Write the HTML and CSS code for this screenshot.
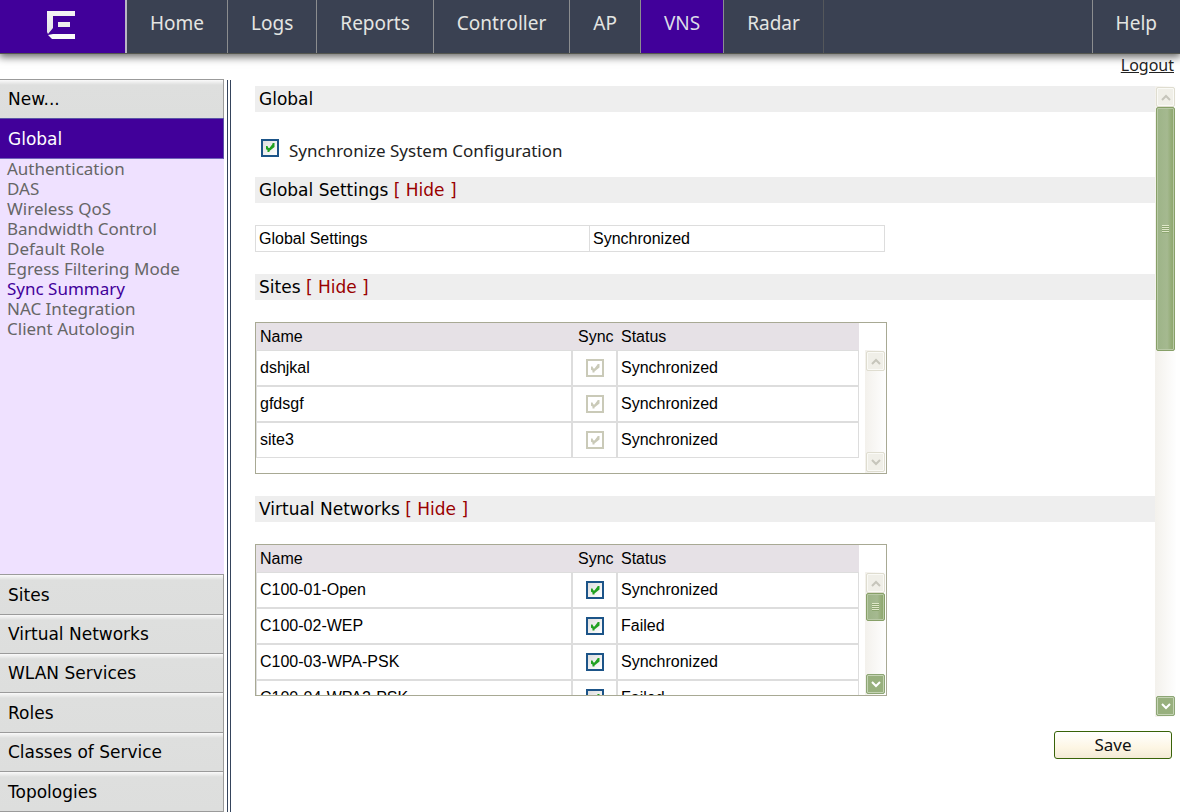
FILE: index.html
```html
<!DOCTYPE html>
<html lang="en">
<head>
<meta charset="utf-8">
<title>VNS - Sync Summary</title>
<link rel="stylesheet" href="styles.css">
</head>
<body>
<header class="topbar">
  <a class="brand" href="#" aria-label="Start page">
    <svg class="brand-mark" viewBox="0 0 30 30" aria-hidden="true">
      <defs>
        <linearGradient id="metal" x1="0" y1="0" x2="0" y2="1">
          <stop offset="0" stop-color="#f4f4f4"/>
          <stop offset="1" stop-color="#e2e2e6"/>
        </linearGradient>
      </defs>
      <path fill="url(#metal)" d="M1 1H29V6H7V18L2 24L1 22Z"/>
      <path fill="#ededed" d="M12 12H24V17H12Z"/>
      <path fill="#fafafa" d="M2 25L7 24H29V29H6Z"/>
    </svg>
  </a>
  <nav class="tabs">
    <a class="tab" href="#">Home</a>
    <a class="tab" href="#">Logs</a>
    <a class="tab" href="#">Reports</a>
    <a class="tab" href="#">Controller</a>
    <a class="tab" href="#">AP</a>
    <a class="tab tab-active" href="#">VNS</a>
    <a class="tab tab-last" href="#">Radar</a>
  </nav>
  <a class="tab tab-help" href="#">Help</a>
</header>
<div class="session"><a class="logout" href="#">Logout</a></div>
<div class="workspace">
  <aside class="sidebar">
    <a class="group" href="#">New...</a>
    <a class="group group-active" href="#">Global</a>
    <nav class="submenu">
      <a class="subitem" href="#">Authentication</a>
      <a class="subitem" href="#">DAS</a>
      <a class="subitem" href="#">Wireless QoS</a>
      <a class="subitem" href="#">Bandwidth Control</a>
      <a class="subitem" href="#">Default Role</a>
      <a class="subitem" href="#">Egress Filtering Mode</a>
      <a class="subitem subitem-active" href="#">Sync Summary</a>
      <a class="subitem" href="#">NAC Integration</a>
      <a class="subitem" href="#">Client Autologin</a>
    </nav>
    <nav class="groups">
      <a class="group" href="#">Sites</a>
      <a class="group" href="#">Virtual Networks</a>
      <a class="group" href="#">WLAN Services</a>
      <a class="group" href="#">Roles</a>
      <a class="group" href="#">Classes of Service</a>
      <a class="group" href="#">Topologies</a>
    </nav>
  </aside>
  <div class="divider"></div>
  <main class="main">
    <div class="panel">
      <div class="content">
        <h1 class="bar">Global</h1>
        <div class="option">
          <input class="check" type="checkbox" id="sync-config" checked>
          <label for="sync-config">Synchronize System Configuration</label>
        </div>
        <h2 class="bar">Global Settings <a class="toggle" href="#">[ Hide ]</a></h2>
        <table class="summary">
          <tr><td class="col-setting">Global Settings</td><td>Synchronized</td></tr>
        </table>
        <h2 class="bar">Sites <a class="toggle" href="#">[ Hide ]</a></h2>
        <div class="listbox">
          <table class="list">
            <thead><tr><th class="col-name">Name</th><th class="col-sync">Sync</th><th>Status</th></tr></thead>
            <tbody>
              <tr><td>dshjkal</td><td class="cell-sync"><input class="check" type="checkbox" aria-label="Sync dshjkal" checked disabled></td><td>Synchronized</td></tr>
              <tr><td>gfdsgf</td><td class="cell-sync"><input class="check" type="checkbox" aria-label="Sync gfdsgf" checked disabled></td><td>Synchronized</td></tr>
              <tr><td>site3</td><td class="cell-sync"><input class="check" type="checkbox" aria-label="Sync site3" checked disabled></td><td>Synchronized</td></tr>
            </tbody>
          </table>
          <div class="scroll scroll-inner">
            <button class="arrow" type="button" aria-label="Scroll up" disabled><svg viewBox="0 0 10 7"><path d="M1 6L5 2L9 6"/></svg></button>
            <div class="track"></div>
            <button class="arrow" type="button" aria-label="Scroll down" disabled><svg viewBox="0 0 10 7"><path d="M1 1L5 5L9 1"/></svg></button>
          </div>
        </div>
        <h2 class="bar">Virtual Networks <a class="toggle" href="#">[ Hide ]</a></h2>
        <div class="listbox">
          <table class="list">
            <thead><tr><th class="col-name">Name</th><th class="col-sync">Sync</th><th>Status</th></tr></thead>
            <tbody>
              <tr><td>C100-01-Open</td><td class="cell-sync"><input class="check" type="checkbox" aria-label="Sync C100-01-Open" checked></td><td>Synchronized</td></tr>
              <tr><td>C100-02-WEP</td><td class="cell-sync"><input class="check" type="checkbox" aria-label="Sync C100-02-WEP" checked></td><td>Failed</td></tr>
              <tr><td>C100-03-WPA-PSK</td><td class="cell-sync"><input class="check" type="checkbox" aria-label="Sync C100-03-WPA-PSK" checked></td><td>Synchronized</td></tr>
              <tr><td>C100-04-WPA2-PSK</td><td class="cell-sync"><input class="check" type="checkbox" aria-label="Sync C100-04-WPA2-PSK" checked></td><td>Failed</td></tr>
            </tbody>
          </table>
          <div class="scroll scroll-inner">
            <button class="arrow" type="button" aria-label="Scroll up" disabled><svg viewBox="0 0 10 7"><path d="M1 6L5 2L9 6"/></svg></button>
            <div class="track"><div class="thumb thumb-short"></div></div>
            <button class="arrow" type="button" aria-label="Scroll down"><svg viewBox="0 0 10 7"><path d="M1 1L5 5L9 1"/></svg></button>
          </div>
        </div>
      </div>
      <div class="scroll">
        <button class="arrow" type="button" aria-label="Scroll page up" disabled><svg viewBox="0 0 10 7"><path d="M1 6L5 2L9 6"/></svg></button>
        <div class="track"><div class="thumb thumb-page"></div></div>
        <button class="arrow" type="button" aria-label="Scroll page down"><svg viewBox="0 0 10 7"><path d="M1 1L5 5L9 1"/></svg></button>
      </div>
    </div>
    <div class="actions"><button class="save" type="button">Save</button></div>
  </main>
</div>
</body>
</html>
```
FILE: styles.css
```css
* { box-sizing: border-box; }

body {
  margin: 0;
  min-height: 100vh;
  display: flex;
  flex-direction: column;
  background: #fff;
  color: #000;
  font: 17px/20px "Noto Sans", "Open Sans", sans-serif;
}

a { color: inherit; text-decoration: none; }

/* Top bar */
.topbar {
  display: flex;
  height: 54px;
  background: #3a4152;
  border-bottom: 1px solid #54564f;
  box-shadow: 0 2px 8px 1px #666;
}
.brand {
  width: 127px;
  display: flex;
  justify-content: center;
  padding: 10px 4px 0 0;
  background: #41009a;
  border-right: 2px solid #b9b5c4;
}
.brand-mark { width: 30px; height: 30px; }
.tabs { flex: 1; display: flex; }
.tab {
  padding: 9px 23px 0;
  border-right: 1px solid #8b8d8f;
  color: #e4e5e2;
  font-size: 19px;
  line-height: 28px;
}
.tab-active { background: #41009a; color: #dcdce8; }
.tab-last { border-color: #54575b; }
.tab-help { border-right: 0; border-left: 1px solid #8b8d8f; }

.session { height: 26px; padding: 1px 6px 0 0; text-align: right; font-size: 16px; }
.logout { text-decoration: underline; color: #222; }

.workspace { flex: 1; display: flex; }

/* Sidebar */
.sidebar {
  width: 224px;
  margin-top: -1px;
  display: flex;
  flex-direction: column;
  background: #efe1ff;
}
.group {
  display: flex;
  align-items: center;
  min-height: 39px;
  padding-left: 8px;
  background: linear-gradient(#fafafa, #dedfde 5px, #dddedd);
  border-top: 1px solid #9b9b9b;
  border-right: 1px solid #9b9b9b;
  font-family: "DejaVu Sans", sans-serif;
}
.groups { border-bottom: 1px solid #9b9b9b; }
.groups .group:nth-child(3n+1), .groups .group:last-child { min-height: 40px; }
.group-active {
  min-height: 41px;
  background: #41009a;
  color: #fff;
  border-color: #5a55a8;
  border-bottom: 1px solid #6f66b8;
}
.submenu { flex: 1; display: flex; flex-direction: column; padding-left: 7px; color: #666; }
.subitem-active { color: #41009a; }
.divider {
  width: 4px;
  margin-left: 3px;
  border: solid #35445c;
  border-width: 0 1px;
}

/* Content */
.main { flex: 1; padding: 6px 4px 0 24px; }
.panel { display: flex; }
.content { flex: 1; }
.bar {
  margin: 0;
  padding: 3px 4px;
  background: #eee;
  font: 17px/20px "DejaVu Sans", sans-serif;
}
.toggle { color: #990000; }
.option {
  display: flex;
  align-items: center;
  gap: 10px;
  height: 65px;
  padding: 12px 6px 0;
  color: #222;
}
.option .check { margin-bottom: 6px; }

.check {
  appearance: none;
  display: grid;
  place-items: center;
  width: 18px;
  height: 18px;
  margin: 0;
  border: 2px solid #1c5488;
  background: linear-gradient(135deg, #dedede, #fff);
}
.check::before {
  content: "";
  width: 9px;
  height: 9px;
  background: #21a121;
  clip-path: polygon(0 33%, 22% 33%, 33% 55%, 44% 55%, 78% 11%, 78% 0, 100% 0, 100% 44%, 44% 89%, 44% 100%, 22% 100%, 22% 78%, 0 66%);
}
.check:disabled { border-color: #cacab8; background: #fff; }
.check:disabled::before { background: #cacab8; }

.summary, .list {
  border-collapse: separate;
  border-spacing: 0;
  table-layout: fixed;
  font: 16px/20px "Liberation Sans", Arial, sans-serif;
}
.summary { width: 70%; margin: 22px 0; border: 1px solid #ddd; }
.summary td { padding: 3px 3px 2px; }
.summary .col-setting { width: 334px; border-right: 1px solid #ddd; }

.listbox {
  display: flex;
  justify-content: space-between;
  max-width: 632px;
  height: 152px;
  margin: 22px 0;
  overflow: hidden;
  border: 1px solid #a8a994;
}
.listbox:last-child { margin-bottom: 21px; }
.list { width: 603px; height: max-content; }
.list th {
  height: 27px;
  padding: 0 4px;
  background: #e6e1e6;
  text-align: left;
  font-weight: 400;
}
.list td { height: 36px; padding: 0 3px; border: 1px solid #ddd; }
.list .col-name { width: 316px; }
.list .col-sync { width: 45px; padding: 0 0 0 6px; }
.list .cell-sync { padding: 0 0 0 13px; }

/* Scroll bars */
.scroll { width: 21px; display: flex; flex-direction: column; padding: 1px; background: linear-gradient(90deg, #f3f1ec, #fefefe); }
.scroll-inner { margin-top: 27px; }
.track { flex: 1; }
.arrow {
  display: grid;
  place-items: center;
  width: 19px;
  height: 20px;
  padding: 0;
  border: 1px solid #8da675;
  border-radius: 2px;
  background: #98b07e;
  box-shadow: inset 0 0 0 1px #c5d3b4;
}
.arrow svg { width: 10px; height: 7px; fill: none; stroke: #fff; stroke-width: 2; }
.arrow:disabled { border-color: #dfddd0; background: #f0efe8; box-shadow: inset 0 0 0 1px #fafaf6; }
.arrow:disabled svg { stroke: #c6c5bb; }
.thumb {
  display: grid;
  place-items: center;
  border: 1px solid #87a068;
  border-radius: 2px;
  background: linear-gradient(90deg, #9db487, #a5b990 60%, #8aa468);
  box-shadow: inset 0 0 0 1px #b9c9a6;
}
.thumb::before {
  content: "";
  width: 7px;
  height: 8px;
  background: repeating-linear-gradient(#dfe8c9 0 1px, #8ca570 1px 2px);
}
.thumb-short { height: 28px; }
.thumb-page { height: 244px; }

.actions { display: flex; justify-content: flex-end; padding: 14px 4px 0; }
.save {
  width: 118px;
  height: 28px;
  padding: 0;
  border: 1px solid #386208;
  border-radius: 3px;
  background: linear-gradient(#fff, #fdf6e4 60%, #f3ead6);
  color: #111;
  font: 17px/20px "Noto Sans", sans-serif;
}
```
